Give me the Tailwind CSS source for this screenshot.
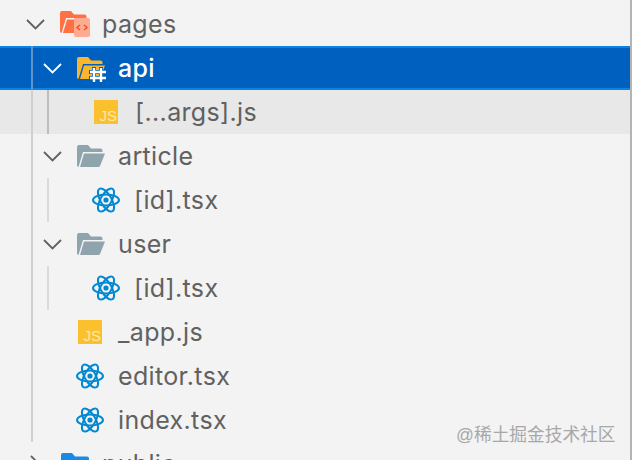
<!DOCTYPE html>
<html lang="en">
<head>
    <meta charset="UTF-8">
    <title>Explorer</title>
    <script src="https://cdn.jsdelivr.net/npm/@tailwindcss/browser@4"></script>
</head>
<body class="w-[632px] h-[460px] overflow-hidden bg-[#f3f3f3]">

    <div class="relative w-[632px] h-[460px] overflow-hidden pt-[2px] border-r-2 border-[#b4b4b4] font-['Inter','Noto_Sans',sans-serif] text-[25px] tracking-[0.35px] text-[#616161]">

        <!-- pages -->
        <div class="flex items-center h-11">
            <svg class="ml-[26px] mr-[15px] shrink-0" width="19" height="11" viewBox="0 0 19 11" fill="none" stroke="#616161" stroke-width="1.8"><path d="M1 1l8.500 8.500L18 1"/></svg>
            <svg class="shrink-0" width="30" height="26" viewBox="0 0 30 26">
                <path d="M2 0h9l3 3.500h10.500a2 2 0 0 1 2 2V7H6L1.500 22A2 2 0 0 1 0 20V2a2 2 0 0 1 2-2z" fill="#ff7043"/>
                <path d="M7 8.500H27L23 22H3z" fill="#ff7043"/>
                <path d="M14 7h14a2 2 0 0 1 2 2v15a2 2 0 0 1-2 2H16a2 2 0 0 1-2-2z" fill="#ffab91"/>
                <path d="M20 14l-3 2.500 3 2.500M24 14l3 2.500-3 2.500" fill="none" stroke="#f4511e" stroke-width="1.500"/>
            </svg>
            <span class="ml-[12px] pt-[2px]">pages</span>
        </div>

        <!-- api -->
        <div class="flex items-center h-11 bg-[#0060c0] border-y-2 border-[#0a84e4] text-white">
            <span class="ml-[31px] w-[12px] h-11 shrink-0 border-l-2 border-[#5f93c9]"></span>
            <svg class="mr-[15px] shrink-0" width="19" height="11" viewBox="0 0 19 11" fill="none" stroke="#fff" stroke-width="1.8"><path d="M1 1l8.500 8.500L18 1"/></svg>
            <svg class="shrink-0" width="29" height="28" viewBox="0 0 29 28">
                <g transform="translate(0 3)">
                    <path d="M2 0h9l3 3.500h9.500a2 2 0 0 1 2 2V7H6L1.500 22A2 2 0 0 1 0 20V2a2 2 0 0 1 2-2z" fill="#f9b52c"/>
                    <path d="M7 8.500H28L23 21a2 2 0 0 1-2 1H3z" fill="#f9b52c"/>
                </g>
                <path d="M17 13v15M24 13v15M12 18h17M12 24h17" fill="none" stroke="#0060c0" stroke-width="4"/>
                <path d="M17 14v14M24 14v14M13 18h16M13 24h16" fill="none" stroke="#fff" stroke-width="2.400"/>
            </svg>
            <span class="ml-[12px] pt-[2px] font-medium">api</span>
        </div>

        <!-- [...args].js -->
        <div class="flex items-center h-11 bg-[#e8e8e8]">
            <span class="ml-[31px] w-[16px] h-11 shrink-0 border-l-2 border-[#d0d0d0]"></span>
            <span class="w-[47px] h-11 shrink-0 border-l-2 border-[#bdbdbd]"></span>
            <span class="w-6 h-6 shrink-0 bg-[#fbc02d] flex items-end justify-end pr-[1px] text-[#ffe9a8] text-[15px] tracking-normal leading-[17px] font-['Liberation_Sans',sans-serif]">JS</span>
            <span class="ml-[17px] pt-[2px]">[...args].js</span>
        </div>

        <!-- article -->
        <div class="flex items-center h-11">
            <span class="ml-[31px] w-[12px] h-11 shrink-0 border-l-2 border-[#d0d0d0]"></span>
            <svg class="mr-[15px] shrink-0" width="19" height="11" viewBox="0 0 19 11" fill="none" stroke="#616161" stroke-width="1.8"><path d="M1 1l8.500 8.500L18 1"/></svg>
            <svg class="shrink-0" width="29" height="23" viewBox="0 0 29 23">
                <path d="M2 0h9l3 3.500h9.500a2 2 0 0 1 2 2V7H6L1.500 22A2 2 0 0 1 0 20V2a2 2 0 0 1 2-2z" fill="#90a4ae"/>
                <path d="M7 8.500H28L23 21a2 2 0 0 1-2 1H3z" fill="#90a4ae"/>
            </svg>
            <span class="ml-[12px] pt-[2px]">article</span>
        </div>

        <!-- article/[id].tsx -->
        <div class="flex items-center h-11">
            <span class="ml-[31px] w-[16px] h-11 shrink-0 border-l-2 border-[#d0d0d0]"></span>
            <span class="w-[45px] h-11 shrink-0 border-l-2 border-[#d9d9d9]"></span>
            <svg class="shrink-0" width="28" height="28" viewBox="0 0 28 28" fill="none" stroke="#0288d1" stroke-width="2">
                <ellipse cx="14" cy="14" rx="13" ry="5.500"/>
                <ellipse cx="14" cy="14" rx="13" ry="5.500" transform="rotate(60 14 14)"/>
                <ellipse cx="14" cy="14" rx="13" ry="5.500" transform="rotate(120 14 14)"/>
                <circle cx="14" cy="14" r="2.600" fill="#0288d1" stroke="none"/>
            </svg>
            <span class="ml-[14px] pt-[2px]">[id].tsx</span>
        </div>

        <!-- user -->
        <div class="flex items-center h-11">
            <span class="ml-[31px] w-[12px] h-11 shrink-0 border-l-2 border-[#d0d0d0]"></span>
            <svg class="mr-[15px] shrink-0" width="19" height="11" viewBox="0 0 19 11" fill="none" stroke="#616161" stroke-width="1.8"><path d="M1 1l8.500 8.500L18 1"/></svg>
            <svg class="shrink-0" width="29" height="23" viewBox="0 0 29 23">
                <path d="M2 0h9l3 3.500h9.500a2 2 0 0 1 2 2V7H6L1.500 22A2 2 0 0 1 0 20V2a2 2 0 0 1 2-2z" fill="#90a4ae"/>
                <path d="M7 8.500H28L23 21a2 2 0 0 1-2 1H3z" fill="#90a4ae"/>
            </svg>
            <span class="ml-[12px] pt-[2px]">user</span>
        </div>

        <!-- user/[id].tsx -->
        <div class="flex items-center h-11">
            <span class="ml-[31px] w-[16px] h-11 shrink-0 border-l-2 border-[#d0d0d0]"></span>
            <span class="w-[45px] h-11 shrink-0 border-l-2 border-[#d9d9d9]"></span>
            <svg class="shrink-0" width="28" height="28" viewBox="0 0 28 28" fill="none" stroke="#0288d1" stroke-width="2">
                <ellipse cx="14" cy="14" rx="13" ry="5.500"/>
                <ellipse cx="14" cy="14" rx="13" ry="5.500" transform="rotate(60 14 14)"/>
                <ellipse cx="14" cy="14" rx="13" ry="5.500" transform="rotate(120 14 14)"/>
                <circle cx="14" cy="14" r="2.600" fill="#0288d1" stroke="none"/>
            </svg>
            <span class="ml-[14px] pt-[2px]">[id].tsx</span>
        </div>

        <!-- _app.js -->
        <div class="flex items-center h-11">
            <span class="ml-[31px] w-[47px] h-11 shrink-0 border-l-2 border-[#d0d0d0]"></span>
            <span class="w-6 h-6 shrink-0 bg-[#fbc02d] flex items-end justify-end pr-[1px] text-[#ffe9a8] text-[15px] tracking-normal leading-[17px] font-['Liberation_Sans',sans-serif]">JS</span>
            <span class="ml-[16px] pt-[2px]">_app.js</span>
        </div>

        <!-- editor.tsx -->
        <div class="flex items-center h-11">
            <span class="ml-[31px] w-[45px] h-11 shrink-0 border-l-2 border-[#d0d0d0]"></span>
            <svg class="shrink-0" width="28" height="28" viewBox="0 0 28 28" fill="none" stroke="#0288d1" stroke-width="2">
                <ellipse cx="14" cy="14" rx="13" ry="5.500"/>
                <ellipse cx="14" cy="14" rx="13" ry="5.500" transform="rotate(60 14 14)"/>
                <ellipse cx="14" cy="14" rx="13" ry="5.500" transform="rotate(120 14 14)"/>
                <circle cx="14" cy="14" r="2.600" fill="#0288d1" stroke="none"/>
            </svg>
            <span class="ml-[14px] pt-[2px]">editor.tsx</span>
        </div>

        <!-- index.tsx -->
        <div class="flex items-center h-11">
            <span class="ml-[31px] w-[45px] h-11 shrink-0 border-l-2 border-[#d0d0d0]"></span>
            <svg class="shrink-0" width="28" height="28" viewBox="0 0 28 28" fill="none" stroke="#0288d1" stroke-width="2">
                <ellipse cx="14" cy="14" rx="13" ry="5.500"/>
                <ellipse cx="14" cy="14" rx="13" ry="5.500" transform="rotate(60 14 14)"/>
                <ellipse cx="14" cy="14" rx="13" ry="5.500" transform="rotate(120 14 14)"/>
                <circle cx="14" cy="14" r="2.600" fill="#0288d1" stroke="none"/>
            </svg>
            <span class="ml-[14px] pt-[2px]">index.tsx</span>
        </div>

        <!-- public, cut off by the window -->
        <div class="flex items-center h-11">
            <svg class="ml-[30px] mr-[20px] shrink-0" width="11" height="19" viewBox="0 0 11 19" fill="none" stroke="#616161" stroke-width="1.8"><path d="M1 1l8.500 8.500L1 18"/></svg>
            <svg class="shrink-0" width="28" height="22" viewBox="0 0 28 22"><path d="M2 0h9l3 3.500h12a2 2 0 0 1 2 2V20a2 2 0 0 1-2 2H2a2 2 0 0 1-2-2V2a2 2 0 0 1 2-2z" fill="#1e88e5"/></svg>
            <span class="ml-[13px] pt-[2px]">public</span>
        </div>

        <!-- watermark -->
        <span class="absolute left-[456px] top-[424px] text-[17.7px] tracking-normal leading-[22px] text-[#a8a8a8] font-['Liberation_Sans','Noto_Sans_CJK_SC',sans-serif]">@稀土掘金技术社区</span>
    </div>

</body>
</html>
